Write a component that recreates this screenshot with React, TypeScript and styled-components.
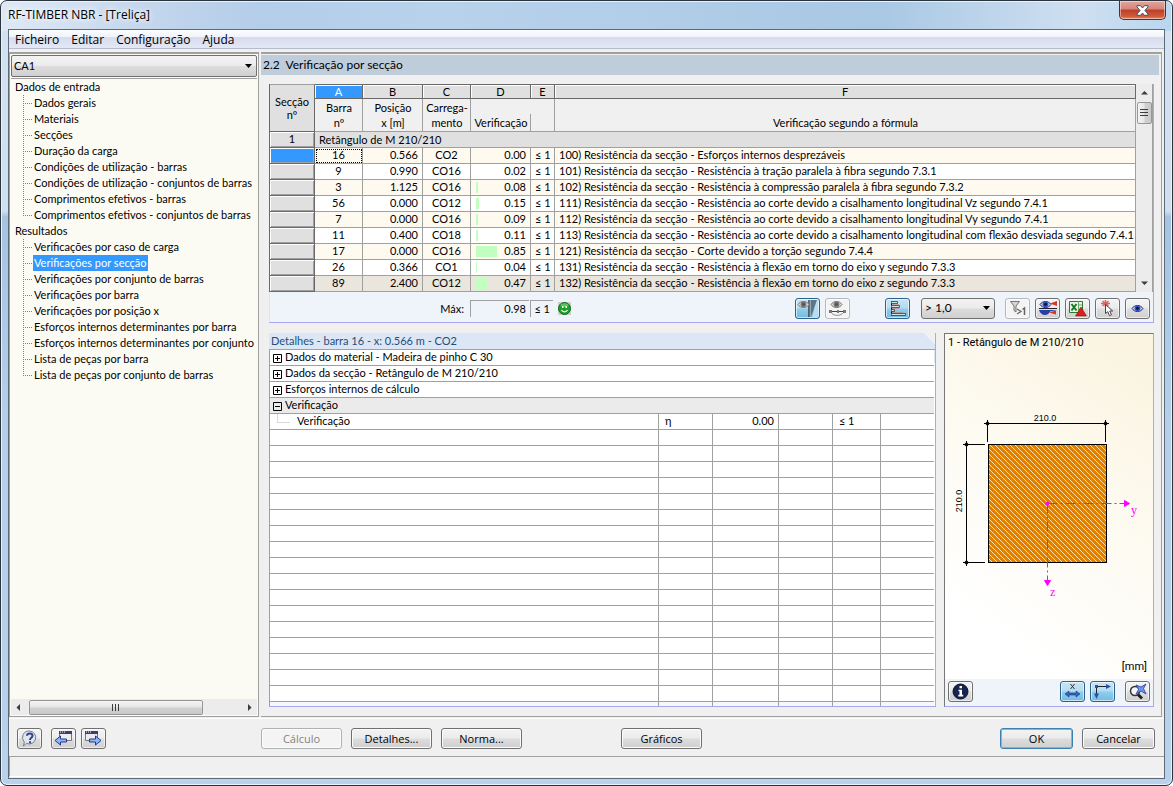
import React from "react";
import styled, { createGlobalStyle, css } from "styled-components";

const segoe = `"Open Sans", "Noto Sans", sans-serif`;
const grid = `Lato, "Liberation Sans", sans-serif`;
const caption = `Roboto, "Liberation Sans", sans-serif`;

const line = "#a0a0a0";
const lilac = "#a8a8ec";
const face = "#f0f0f0";
const accent = "#3399ff";
const pale = "#eff3fa";

const GlobalStyle = createGlobalStyle`
  * { box-sizing: border-box; }
  body { margin: 0; background: #fff; color: #000; }
  button, select { font: inherit; color: inherit; }
`;

const Window = styled.div`
  min-height: 100vh;
  display: flex;
  flex-direction: column;
  padding: 0 7px 6px;
  border: 1px solid #2b333d;
  border-radius: 7px;
  font: 11px/16px ${grid};
  box-shadow: inset 0 0 0 1px #e6f2fc;
  background:
    linear-gradient(to right, #dfe9f5 0, #c3d6ec 150px, #b4cde9 260px, #b9d2ec 440px, #a9c8e4 880px, #cfdff1 1080px, #b9d6ee 100%) top / 100% 30px no-repeat,
    linear-gradient(#d4e2f1 0, #cfdff0 210px, #a6c3e0 216px, #b5cfea 420px, #b9d1ea 100%);
`;

const TitleBar = styled.header`
  display: flex;
  justify-content: space-between;
  align-items: flex-start;
  height: 28px;
  margin-right: -1px;
`;

const Title = styled.h1`
  margin: 0;
  font: 12px/28px ${segoe};
  text-shadow: 0 0 6px #fff, 0 0 6px #fff;
`;

const CloseButton = styled.button`
  width: 47px;
  height: 19px;
  padding: 0;
  display: grid;
  place-items: center;
  border: 1px solid #5b2a2c;
  border-top: 0;
  border-radius: 0 0 5px 5px;
  background: linear-gradient(#e3a59b 0, #d58578 45%, #bd3e27 50%, #cf5b3c 85%, #e08a5f 100%);
  box-shadow: inset 0 0 0 1px rgba(255, 255, 255, 0.45);
`;

const Client = styled.div`
  flex: 1;
  display: flex;
  flex-direction: column;
  border: 1px solid #5d6b78;
  background: ${face};
`;

const MenuBar = styled.nav`
  display: flex;
  gap: 12px;
  height: 19px;
  padding: 0 6px;
  border-bottom: 1px solid #b6bccc;
  background: linear-gradient(#fcfdfe 0, #f0f3fa 38%, #d6dcee 42%, #e2e8f5 100%);
  a { color: #000; text-decoration: none; font: 12px/20px ${segoe}; }
`;

const Main = styled.main`
  flex: 1;
  display: grid;
  grid-template-columns: 250px minmax(0, 1fr);
  gap: 2px;
  padding: 3px 2px 0 0;
`;

const Sidebar = styled.aside`
  display: flex;
  flex-direction: column;
  min-height: 0;
  border: 1px solid ${line};
  border-top-width: 2px;
  padding: 1px;
  background: #fcfbf3;
`;

const selectFace = css`
  appearance: none;
  border: 1px solid #707070;
  border-radius: 3px;
  background:
    url("data:image/svg+xml,%3Csvg xmlns='http://www.w3.org/2000/svg' width='7' height='4'%3E%3Cpath d='M0 0h7L3.5 4z'/%3E%3C/svg%3E") right 4px center no-repeat,
    linear-gradient(#f3f3f3 0, #ebebeb 48%, #dddddd 52%, #d0d0d0 100%);
`;

const CaseSelect = styled.select`
  ${selectFace}
  width: 100%;
  height: 22px;
  padding: 0 4px 0 2px;
  border-radius: 2px;
`;

const Tree = styled.div`
  flex: 1;
  margin-top: 1px;
  padding: 0 0 0 3px;
  border-top: 1px solid ${line};
  white-space: nowrap;
  overflow: hidden;
  ul { list-style: none; margin: 0; padding: 0 0 0 9px; }
  li { display: flex; height: 16px; }
`;

const TreeHead = styled.div`
  height: 16px;
  padding-left: 1px;
`;

const Branch = styled.span<{ $last?: boolean }>`
  flex: none;
  width: 9px;
  height: 16px;
  margin-right: 1px;
  background:
    repeating-linear-gradient(#808080 0 1px, transparent 1px 2px) 0 0 / 1px ${(p) => (p.$last ? "9px" : "16px")} no-repeat,
    repeating-linear-gradient(to right, #808080 0 1px, transparent 1px 2px) 0 8px / 9px 1px no-repeat;
`;

const TreeLink = styled.a<{ $on?: boolean }>`
  padding: 0 1px;
  text-decoration: none;
  color: ${(p) => (p.$on ? "#fff" : "#000")};
  background: ${(p) => (p.$on ? accent : "none")};
`;

const HScroll = styled.div`
  display: flex;
  align-items: center;
  gap: 7px;
  height: 16px;
  padding: 0 4px;
  background: #ececec;
`;

const Thumb = styled.div<{ $vertical?: boolean }>`
  display: grid;
  place-items: center;
  border: 1px solid #979797;
  border-radius: 2px;
  width: ${(p) => (p.$vertical ? "15px" : "174px")};
  height: ${(p) => (p.$vertical ? "22px" : "15px")};
  background: linear-gradient(${(p) => (p.$vertical ? "to right, " : "")}#f4f4f4 0, #e6e6e6 48%, #d2d2d4 52%, #c8c8ca 100%);
`;

const Spacer = styled.div`
  flex: 1;
`;

const Content = styled.section`
  display: flex;
  flex-direction: column;
  min-width: 0;
  border: 1px solid ${line};
  border-top-width: 2px;
  border-left: 0;
  padding: 1px 1px 9px 0;
`;

const SectionTitle = styled.h2`
  margin: 0 1px 9px 0;
  padding: 0 2px;
  height: 20px;
  background: #bfccda;
  font: 12px/20px ${grid};
  white-space: pre;
`;

const Results = styled.section`
  margin: 0 6px 10px 8px;
  border-right: 1px solid ${lilac};
  border-bottom: 1px solid ${lilac};
  background: ${pale};
`;

const TableRow = styled.div`
  display: grid;
  grid-template-columns: minmax(0, 1fr) 17px;
  background: ${face};
`;

const VScroll = styled.div`
  display: flex;
  flex-direction: column;
  align-items: center;
  gap: 7px;
  padding: 6px 0;
  border-right: 1px solid ${line};
  background: #ececec;
`;

const ResultTable = styled.table`
  width: 100%;
  table-layout: fixed;
  border-collapse: separate;
  border-spacing: 0;
  border-left: 1px solid #696969;
  font: 11px/13px ${grid};
  white-space: nowrap;
  th, td { padding: 0; font-weight: normal; overflow: hidden; }
  tbody th, tbody td { vertical-align: top; }
`;

const Letter = styled.th<{ $on?: boolean }>`
  height: 15px;
  line-height: 12px;
  border: 1px solid #696969;
  border-left: 0;
  color: ${(p) => (p.$on ? "#fff" : "#000")};
  background: ${(p) => (p.$on ? accent : "#e0e0e0")};
  box-shadow: inset 1px 1px #fff;
`;

const CornerHead = styled.th`
  border-top: 1px solid ${line};
  border-right: 1px solid #696969;
  border-bottom: 1px solid #696969;
  line-height: 13px;
  background: #e0e0e0;
`;

const NameHead = styled.th<{ $divider?: "full" | "half" }>`
  && { padding-bottom: 1px; }
  height: 33px;
  line-height: 15px;
  vertical-align: bottom;
  border-bottom: 1px solid ${line};
  background: ${(p) =>
    p.$divider === "half"
      ? `linear-gradient(${line}, ${line}) right bottom / 1px 17px no-repeat`
      : `linear-gradient(${line}, ${line}) right bottom / 1px 100% no-repeat`};
`;

const RowHead = styled.th<{ $on?: boolean }>`
  height: 16px;
  border-right: 1px solid #696969;
  border-bottom: 1px solid #696969;
  background: ${(p) => (p.$on ? accent : "#e0e0e0")};
  box-shadow: inset 1px 1px #fff, inset -1px -1px ${line};
`;

const GroupCell = styled.td`
  && { padding-left: 4px; }
  height: 16px;
  line-height: 15px;
  background: #e0e0e0;
  border-right: 1px solid ${line};
  border-bottom: 1px solid ${line};
`;

const Cell = styled.td<{ $align?: string; $tone: string; $focus?: boolean; $wide?: boolean }>`
  && { padding: 0 ${(p) => (p.$wide ? 0 : 4)}px 0 4px; }
  height: 16px;
  text-align: ${(p) => p.$align || "left"};
  border-right: 1px solid ${line};
  border-bottom: 1px solid ${line};
  background: ${(p) => p.$tone};
  ${(p) => p.$focus && "outline: 1px dotted #000; outline-offset: -2px;"}
`;

const Ratio = styled.div`
  display: flex;
  justify-content: space-between;
  align-items: flex-end;
  padding-left: 1px;
`;

const Bar = styled.span`
  height: 11px;
  background: #c0ffc0;
`;

const Toolbar = styled.div`
  display: flex;
  align-items: center;
  gap: 5px;
  height: 30px;
  padding: 2px 3px 0 0;
  border-left: 1px solid #dfe5f2;
`;

const MaxLabel = styled.span`
  width: 200px;
  padding-right: 6px;
  margin-right: -5px;
  text-align: right;
  font: 11px/17px ${grid};
`;

const MaxField = styled.output<{ $w: number }>`
  width: ${(p) => p.$w}px;
  height: 17px;
  padding-right: 3px;
  margin-right: ${(p) => (p.$w > 30 ? "-4px" : "0")};
  border-top: 1px solid ${line};
  border-left: 1px solid ${line};
  text-align: right;
  font: 11px/16px ${grid};
`;

const pressed = css`
  border-color: #2c628b;
  background: linear-gradient(#c9e4f3 0, #b3dcf2 48%, #8fcdec 52%, #74bbe0 100%);
`;

const IconButton = styled.button<{ $pressed?: boolean; $gap?: number }>`
  width: 25px;
  height: 21px;
  padding: 0;
  margin-right: ${(p) => p.$gap || 0}px;
  display: grid;
  place-items: center;
  border: 1px solid #707070;
  border-radius: 3px;
  background: linear-gradient(#f4f4f4 0, #ebebeb 48%, #dddddd 52%, #cfcfcf 100%);
  box-shadow: inset 0 0 0 1px rgba(255, 255, 255, 0.6);
  ${(p) => p.$pressed && pressed}
  &:disabled { border-color: #b4b8bc; background: #f4f4f4; }
`;

const LimitSelect = styled.select`
  ${selectFace}
  width: 74px;
  height: 21px;
  padding: 0 4px 0 3px;
  margin: 0 5px 0 6px;
  font: 12px/18px ${grid};
`;

const Lower = styled.div`
  flex: 1;
  display: grid;
  grid-template-columns: minmax(0, 1fr) 210px;
  gap: 8px;
  margin: 0 6px 0 8px;
`;

const Details = styled.section`
  display: flex;
  flex-direction: column;
  min-width: 0;
  border-right: 1px solid ${lilac};
  border-bottom: 1px solid ${lilac};
  background: linear-gradient(225deg, ${face} 8px, #dce6f4 8px) top / 100% 30px no-repeat, #fff;
`;

const DetailTitle = styled.h3`
  margin: 0;
  padding-left: 2px;
  height: 17px;
  border-bottom: 1px solid ${line};
  color: #1f4e79;
  font: 11px/16px ${grid};
`;

const DetailTable = styled.table`
  width: calc(100% - 1px);
  table-layout: fixed;
  border-collapse: separate;
  border-spacing: 0;
  border-left: 1px solid ${line};
  font: 11px/13px ${grid};
  td { height: 16px; padding: 0; vertical-align: top; border-bottom: 1px solid ${line}; }
  tr > td:not(:last-child) { border-right: 1px solid ${line}; }
  tr:last-child > td { height: 4px; border-bottom: 0; background: #f4f7fb; }
`;

const Fold = styled.button`
  display: flex;
  align-items: flex-end;
  gap: 3px;
  height: 13px;
  padding: 0 0 0 3px;
  border: 0;
  background: none;
`;

const FoldRow = styled.tr<{ $open?: boolean }>`
  background: ${(p) => (p.$open ? "#ebebeb" : "#fff")};
`;

const Child = styled.div`
  display: flex;
  align-items: flex-start;
  gap: 7px;
  padding-left: 7px;
  &::before {
    content: "";
    width: 12px;
    height: 8px;
    border-left: 1px solid #d8d8d8;
    border-bottom: 1px solid #d8d8d8;
  }
`;

const Pad = styled.div<{ $right?: boolean }>`
  padding: 0 4px 0 6px;
  text-align: ${(p) => (p.$right ? "right" : "left")};
`;

const Preview = styled.section`
  display: flex;
  flex-direction: column;
  border: 1px solid ${lilac};
  border-top-color: #777;
  border-left-color: #777;
  background: linear-gradient(35deg, #fff 20%, #fdfaf0 60%, #faf3de 100%);
`;

const PreviewTitle = styled.h3`
  margin: 0;
  padding-left: 3px;
  font: 11px/17px ${caption};
`;

const Drawing = styled.svg`
  flex: 1;
  width: 100%;
  min-height: 0;
`;

const Unit = styled.div`
  padding: 0 6px 4px 0;
  text-align: right;
  font: 11px/16px ${caption};
`;

const PreviewBar = styled.div`
  display: flex;
  align-items: center;
  gap: 5px;
  height: 27px;
  padding: 0 3px 2px 3px;
  background: ${pale};
`;

const Footer = styled.footer`
  display: flex;
  align-items: center;
  gap: 9px;
  height: 39px;
  margin-top: 1px;
  padding: 2px 9px 0 8px;
  border-top: 1px solid #fff;
  border-bottom: 1px solid ${line};
`;

const ToolGroup = styled.div`
  display: flex;
  gap: 5px;
  width: 235px;
`;

const PushButton = styled.button<{ $w: number; $primary?: boolean; $gap?: number }>`
  width: ${(p) => p.$w}px;
  height: 21px;
  padding: 0;
  margin-right: ${(p) => p.$gap || 0}px;
  border: 1px solid ${(p) => (p.$primary ? "#3c7fb1" : "#707070")};
  border-radius: 3px;
  background: linear-gradient(#f3f3f3 0, #ebebeb 48%, #dddddd 52%, #cfcfcf 100%);
  box-shadow: inset 0 0 0 1px ${(p) => (p.$primary ? "#48d0f4" : "#fcfcfc")};
  font: 11px/17px ${segoe};
  &:disabled { border-color: #adb2b5; background: #f4f4f4; color: #838383; }
`;

const StatusBar = styled.div`
  height: 20px;
  margin-bottom: 1px;
  border-left: 1px solid ${line};
  border-bottom: 1px solid #fff;
`;

const Arrow = ({ d, w = 7, h = 7 }: { d: string; w?: number; h?: number }) => (
  <svg width={w} height={h} viewBox={`0 0 ${w} ${h}`}><path d={d} fill="#3c3c3c" /></svg>
);

const Glyph = ({ children }: { children: React.ReactNode }) => (
  <svg width="21" height="17" viewBox="0 0 21 17" fill="none">{children}</svg>
);

const EyeShape = ({ x = 0, y = 0, grey }: { x?: number; y?: number; grey?: boolean }) => (
  <g transform={`translate(${x} ${y})`}>
    <path d="M0 4.500C2.500 0.500 8.500 0.500 11 4.500C8.500 8.500 2.500 8.500 0 4.500Z" fill={grey ? "#dcdcdc" : "#c3cdf2"} stroke={grey ? "#777" : "#1e2f7a"} />
    <circle cx="5.500" cy="4.300" r="2.900" fill={grey ? "#777" : "#3252c4"} />
    <circle cx="5.500" cy="4.300" r="1.500" fill={grey ? "#555" : "#0b1442"} />
  </g>
);

const CloseIcon = () => (
  <svg width="13" height="11" viewBox="0 0 13 11">
    <path d="M1 .7h3.600l1.900 2.300L8.400.7H12v1.200L8.900 5.500 12 9v1.300H8.400L6.500 8l-1.900 2.300H1V9l3.100-3.500L1 1.900z" fill="#fff" stroke="#4a5060" strokeWidth="1" />
  </svg>
);

const HelpIcon = () => (
  <Glyph>
    <path d="M10.500 1a6.500 6.500 0 1 1-3 12.400L4.500 16l.8-4A6.500 6.500 0 0 1 10.500 1Z" fill="#e2e6ee" stroke="#777d88" />
    <path d="M8 5.800c0-3.200 5.500-3.200 5.500 0 0 2-2.500 2-2.500 4.200" stroke="#2c4596" strokeWidth="2" />
    <path d="M10 11.300h2v1.900h-2z" fill="#2c4596" />
  </Glyph>
);

const WindowArrowIcon = ({ right }: { right?: boolean }) => (
  <Glyph>
    <path d={right ? "M2.500 1.500h12v9h-12z" : "M6.500 1.500h12v9h-12z"} fill="#ececec" stroke="#777" />
    <path d={right ? "M2 1h13v3H2z" : "M6 1h13v3H6z"} fill="#3a3f72" />
    <path d={right ? "M3 2h1M5 2h1M7 2h1" : "M7 2h1M9 2h1M11 2h1"} stroke="#fff" strokeWidth="1" />
    <path d={right ? "M18 10.500l-5.500-4.500v3h-6v3h6v3z" : "M2 10.500l5.500-4.500v3h6v3h-6v3z"} fill="#8eb4f3" stroke="#22388f" />
  </Glyph>
);

const EyeBeamIcon = () => (
  <Glyph>
    <path d="M12 0h8L14 17h-2z" fill="#5b7688" />
    <path d="M15 17L20.500 0H21v17z" fill="#b9dcee" />
    <path d="M11.500 0v17" stroke="#333" strokeWidth=".7" />
    <path d="M13 0h1v17h-1z" fill="#8fa9b8" />
    <EyeShape x={1} y={0} grey />
  </Glyph>
);

const EyeMemberIcon = () => (
  <Glyph>
    <EyeShape x={4} y={0} grey />
    <path d="M3 11.500h15" stroke="#444" />
    <path d="M4 12c2 4.500 10 4.500 13 0" stroke="#8a9090" />
    <path d="M2 10h3v3H2zM16 10h3v3h-3zM10 10h2v3h-2z" fill="#777" />
  </Glyph>
);

const BarsIcon = () => (
  <Glyph>
    <path d="M4.500 1v15" stroke="#111" />
    <path d="M4.500 1.500h6v2h-6M4.500 5.500h8v2h-8M4.500 9.500h3v2h-3M4.500 13.500h14v2h-14" fill="#c9e6e4" stroke="#23423f" strokeWidth=".8" />
    <path d="M5 4.500h7M5 8.500h7M5 12.500h11" stroke="#c77" strokeWidth=".6" />
  </Glyph>
);

const FilterIcon = () => (
  <Glyph>
    <path d="M3.500 1.500h9L9 6v6l-2-1.500V6z" fill="#d5d5d5" stroke="#777" />
    <path d="M10 9l4 2.500-4 2.500" stroke="#666" strokeWidth="1.300" />
    <path d="M15.500 9.500L17.500 8v7" stroke="#666" strokeWidth="1.500" />
  </Glyph>
);

const DiagramEyeIcon = () => (
  <Glyph>
    <path d="M13 3.500l7-2.500v5z" fill="#d32" />
    <path d="M2 8.500h18" stroke="#222" />
    <EyeShape x={3} y={0} />
    <path d="M2 10h18l-7 1.500C11 16.500 4 16.500 2 10Z" fill="#2440a8" />
    <path d="M12 12.500l7-2v4z" fill="#d32" />
  </Glyph>
);

const ExcelIcon = () => (
  <Glyph>
    <path d="M2.500 1.500h13v11h-13z" fill="#e8f4e6" stroke="#2d7a34" />
    <path d="M11.500 1v12M11 5h4M11 9h4" stroke="#6aa86a" />
    <path d="M4.500 4l5 6.500M9.500 4l-5 6.500" stroke="#187a28" strokeWidth="2" />
    <path d="M14 7l5.500 9h-11z" fill="#d8201c" stroke="#8e1010" strokeWidth=".6" />
  </Glyph>
);

const PickIcon = () => (
  <Glyph>
    <path d="M4 3.500h9M8.500 0v7M5.500 1l6 5M11.500 1l-6 5" stroke="#e0605c" strokeWidth="1.400" />
    <path d="M8.500 4.500v9l2.300-1.800 1.700 4 2-1-1.800-3.700h3z" fill="#fff" stroke="#444" />
  </Glyph>
);

const EyeIcon = () => <Glyph><EyeShape x={5} y={4} /></Glyph>;

const InfoIcon = () => (
  <Glyph>
    <circle cx="10.500" cy="8.500" r="7.500" fill="#16254f" stroke="#0a1230" />
    <path d="M9.500 3h2.500v2.200H9.500zM8.500 6.800H12v5h1.200V13.500H8.300V11.800h1.200V8.300h-1z" fill="#fff" />
  </Glyph>
);

const DimensionIcon = () => (
  <Glyph>
    <path d="M8.500 1l4 5M12.500 1l-4 5" stroke="#333" />
    <path d="M3 11l4-3v2h7V8l4 3-4 3v-2H7v2z" fill="#3a62c0" stroke="#1d357c" strokeWidth=".6" />
  </Glyph>
);

const AxesIcon = () => (
  <Glyph>
    <path d="M4.500 12V3.500H16" stroke="#222" />
    <path d="M14 1l5 2.500L14 6zM2 10.500h5L4.500 16z" fill="#2a4fb4" />
    <path d="M3 2h3v3H3z" fill="#2a4fb4" />
  </Glyph>
);

const ZoomResetIcon = () => (
  <Glyph>
    <circle cx="8" cy="8" r="4.500" fill="#f4f6fa" stroke="#333" strokeWidth="1.500" />
    <path d="M11 11.500l4 4" stroke="#222" strokeWidth="3" />
    <path d="M9 2l5 2L19 1l-2.500 4.500L19 11l-5-3-5 3 2.500-4.500z" fill="#6e95e8" stroke="#1f3c9c" strokeWidth=".8" />
  </Glyph>
);

const Smiley = () => (
  <svg width="13" height="13" viewBox="0 0 13 13">
    <rect width="13" height="13" fill="#cfcfcf" />
    <circle cx="6.500" cy="6.500" r="6" fill="#1fa02c" stroke="#0c6a18" />
    <ellipse cx="6.500" cy="3" rx="4" ry="1.800" fill="#7fe07f" opacity=".6" />
    <path d="M4 4h1.500v2H4zM7.500 4H9v2H7.500z" fill="#fff" />
    <path d="M3.500 8c1.500 2.500 4.500 2.500 6 0" fill="none" stroke="#fff" strokeWidth="1.200" />
  </svg>
);

const FoldMark = ({ open }: { open?: boolean }) => (
  <svg width="9" height="9" viewBox="0 0 9 9">
    <path d={open ? "M.5.5h8v8h-8zM2 4.500h5" : "M.5.5h8v8h-8zM2 4.500h5M4.500 2v5"} fill="none" stroke="#000" />
  </svg>
);

const inputItems = [
  "Dados gerais", "Materiais", "Secções", "Duração da carga",
  "Condições de utilização - barras", "Condições de utilização - conjuntos de barras",
  "Comprimentos efetivos - barras", "Comprimentos efetivos - conjuntos de barras",
];
const resultItems = [
  "Verificações por caso de carga", "Verificações por secção", "Verificações por conjunto de barras",
  "Verificações por barra", "Verificações por posição x", "Esforços internos determinantes por barra",
  "Esforços internos determinantes por conjunto", "Lista de peças por barra", "Lista de peças por conjunto de barras",
];

const rows: [string, string, string, string, number, string][] = [
  ["16", "0.566", "CO2", "0.00", 0, "100) Resistência da secção - Esforços internos desprezáveis"],
  ["9", "0.990", "CO16", "0.02", 0, "101) Resistência da secção - Resistência à tração paralela à fibra segundo 7.3.1"],
  ["3", "1.125", "CO16", "0.08", 2, "102) Resistência da secção - Resistência à compressão paralela à fibra segundo 7.3.2"],
  ["56", "0.000", "CO12", "0.15", 3, "111) Resistência da secção - Resistência ao corte devido a cisalhamento longitudinal Vz segundo 7.4.1"],
  ["7", "0.000", "CO16", "0.09", 2, "112) Resistência da secção - Resistência ao corte devido a cisalhamento longitudinal Vy segundo 7.4.1"],
  ["11", "0.400", "CO18", "0.11", 2, "113) Resistência da secção - Resistência ao corte devido a cisalhamento longitudinal com flexão desviada segundo 7.4.1"],
  ["17", "0.000", "CO16", "0.85", 21, "121) Resistência da secção - Corte devido a torção segundo 7.4.4"],
  ["26", "0.366", "CO1", "0.04", 1, "131) Resistência da secção - Resistência à flexão em torno do eixo y segundo 7.3.3"],
  ["89", "2.400", "CO12", "0.47", 11, "132) Resistência da secção - Resistência à flexão em torno do eixo z segundo 7.3.3"],
];

const folds = ["Dados do material - Madeira de pinho C 30", "Dados da secção - Retângulo de M 210/210", "Esforços internos de cálculo"];

const TreeBranch = ({ title, items, current }: { title: string; items: string[]; current?: string }) => (
  <>
    <TreeHead>{title}</TreeHead>
    <ul>
      {items.map((item, i) => (
        <li key={item}>
          <Branch $last={i === items.length - 1} />
          <TreeLink href="#" $on={item === current}>{item}</TreeLink>
        </li>
      ))}
    </ul>
  </>
);

const tone = (i: number) => (i === rows.length - 1 ? "#ebe6dd" : i % 2 ? "#fff" : "#fffaf0");

const SectionDrawing = () => (
  <Drawing viewBox="945 351 208 308" role="img" aria-label="210 x 210">
    <defs>
      <pattern id="hatch" width="5" height="5" patternUnits="userSpaceOnUse">
        <rect width="5" height="5" fill="#e08000" />
        <path d="M-1 -1L6 6M-1 4L1 6M4 -1L6 1" stroke="#ffe0b0" strokeWidth="1" />
      </pattern>
    </defs>
    <rect x="988.500" y="444.500" width="118" height="118" fill="url(#hatch)" stroke="#000" />
    <g stroke="#000" fill="#000">
      <path d="M984 423.500h125M987.500 420v22M1105.500 420v22M966.500 441v125M963 444.500h22M963 562.500h22" fill="none" />
      <circle cx="987.500" cy="423.500" r="1.500" /><circle cx="1105.500" cy="423.500" r="1.500" />
      <circle cx="966.500" cy="444.500" r="1.500" /><circle cx="966.500" cy="562.500" r="1.500" />
    </g>
    <g fontFamily="Liberation Sans, sans-serif" fontSize="9" textAnchor="middle">
      <text x="1045" y="421">210.0</text>
      <text transform="translate(962 501) rotate(-90)">210.0</text>
    </g>
    <g stroke="#f0f" fill="#f0f">
      <path d="M1047.500 503.500h77M1047.500 503.500v77" strokeDasharray="10 3 2 3" fill="none" />
      <circle cx="1047.500" cy="503.500" r="1.500" />
      <path d="M1124.500 500.500v6l5-3zM1044.500 580.500h6l-3 5z" />
    </g>
    <g fontFamily="Liberation Serif, serif" fontSize="12" fill="#f0f">
      <text x="1131" y="514">y</text>
      <text x="1050" y="596">z</text>
    </g>
  </Drawing>
);

export default function App() {
  return (
    <>
      <GlobalStyle />
      <Window>
        <TitleBar>
          <Title>RF-TIMBER NBR - [Treliça]</Title>
          <CloseButton aria-label="Fechar"><CloseIcon /></CloseButton>
        </TitleBar>
        <Client>
          <MenuBar>
            {["Ficheiro", "Editar", "Configuração", "Ajuda"].map((m) => <a href="#" key={m}>{m}</a>)}
          </MenuBar>
          <Main>
            <Sidebar>
              <CaseSelect aria-label="Caso"><option>CA1</option></CaseSelect>
              <Tree>
                <TreeBranch title="Dados de entrada" items={inputItems} />
                <TreeBranch title="Resultados" items={resultItems} current="Verificações por secção" />
              </Tree>
              <HScroll>
                <Arrow w={7} h={7} d="M5 0v7L1.500 3.500z" />
                <Thumb><Arrow w={8} h={7} d="M0 0h1v7H0zM3 0h1v7H3zM6 0h1v7H6z" /></Thumb>
                <Spacer />
                <Arrow w={7} h={7} d="M2 0v7l3.500-3.500z" />
              </HScroll>
            </Sidebar>
            <Content>
              <SectionTitle>2.2  Verificação por secção</SectionTitle>
              <Results>
                <TableRow>
                  <ResultTable>
                    <colgroup>
                      <col style={{ width: 45 }} /><col style={{ width: 48 }} /><col style={{ width: 60 }} />
                      <col style={{ width: 48 }} /><col style={{ width: 60 }} /><col style={{ width: 24 }} /><col />
                    </colgroup>
                    <thead>
                      <tr>
                        <CornerHead rowSpan={2}>Secção<br />nº</CornerHead>
                        {["A", "B", "C", "D", "E", "F"].map((l) => <Letter key={l} $on={l === "A"}>{l}</Letter>)}
                      </tr>
                      <tr>
                        <NameHead>Barra<br />nº</NameHead>
                        <NameHead>Posição<br />x [m]</NameHead>
                        <NameHead>Carrega-<br />mento</NameHead>
                        <NameHead $divider="half">Verificação</NameHead>
                        <NameHead />
                        <NameHead>Verificação segundo a fórmula</NameHead>
                      </tr>
                    </thead>
                    <tbody>
                      <tr><RowHead>1</RowHead><GroupCell colSpan={6}>Retângulo de M 210/210</GroupCell></tr>
                      {rows.map(([bar, pos, co, ratio, w, text], i) => (
                        <tr key={bar}>
                          <RowHead $on={i === 0} />
                          <Cell $tone={tone(i)} $align="center" $focus={i === 0}>{bar}</Cell>
                          <Cell $tone={tone(i)} $align="right">{pos}</Cell>
                          <Cell $tone={tone(i)} $align="center">{co}</Cell>
                          <Cell $tone={tone(i)}><Ratio><Bar style={{ width: w }} />{ratio}</Ratio></Cell>
                          <Cell $tone={tone(i)} $wide>≤ 1</Cell>
                          <Cell $tone={tone(i)} $wide>{text}</Cell>
                        </tr>
                      ))}
                    </tbody>
                  </ResultTable>
                  <VScroll>
                    <Arrow w={7} h={5} d="M0 4.500h7L3.500 1z" />
                    <Thumb $vertical><Arrow w={8} h={8} d="M0 0h8v1H0zM0 3h8v1H0zM0 6h8v1H0z" /></Thumb>
                    <Spacer />
                    <Arrow w={7} h={5} d="M0 .5h7L3.500 4z" />
                  </VScroll>
                </TableRow>
                <Toolbar>
                  <MaxLabel>Máx:</MaxLabel>
                  <MaxField $w={59}>0.98</MaxField>
                  <MaxField $w={23}>≤ 1</MaxField>
                  <Smiley />
                  <Spacer />
                  <IconButton $pressed aria-label="Visualizar barra"><EyeBeamIcon /></IconButton>
                  <IconButton disabled $gap={30} aria-label="Visualizar conjunto"><EyeMemberIcon /></IconButton>
                  <IconButton $pressed aria-label="Barras coloridas"><BarsIcon /></IconButton>
                  <LimitSelect aria-label="Limite"><option>&gt; 1,0</option></LimitSelect>
                  <IconButton disabled aria-label="Filtro"><FilterIcon /></IconButton>
                  <IconButton aria-label="Diagramas"><DiagramEyeIcon /></IconButton>
                  <IconButton aria-label="Exportar"><ExcelIcon /></IconButton>
                  <IconButton aria-label="Selecionar"><PickIcon /></IconButton>
                  <IconButton aria-label="Vista"><EyeIcon /></IconButton>
                </Toolbar>
              </Results>
              <Lower>
                <Details>
                  <DetailTitle>Detalhes - barra 16 - x: 0.566 m - CO2</DetailTitle>
                  <DetailTable>
                    <colgroup>
                      <col /><col style={{ width: 54 }} /><col style={{ width: 66 }} />
                      <col style={{ width: 54 }} /><col style={{ width: 48 }} /><col style={{ width: 53 }} />
                    </colgroup>
                    <tbody>
                      {folds.map((f) => (
                        <FoldRow key={f}><td colSpan={6}><Fold><FoldMark />{f}</Fold></td></FoldRow>
                      ))}
                      <FoldRow $open><td colSpan={6}><Fold><FoldMark open />Verificação</Fold></td></FoldRow>
                      <tr>
                        <td><Child>Verificação</Child></td>
                        <td><Pad>η</Pad></td>
                        <td><Pad $right>0.00</Pad></td>
                        <td />
                        <td><Pad>≤ 1</Pad></td>
                        <td />
                      </tr>
                      {Array.from({ length: 18 }, (_, i) => (
                        <tr key={i}><td /><td /><td /><td /><td /><td /></tr>
                      ))}
                    </tbody>
                  </DetailTable>
                </Details>
                <Preview>
                  <PreviewTitle>1 - Retângulo de M 210/210</PreviewTitle>
                  <SectionDrawing />
                  <Unit>[mm]</Unit>
                  <PreviewBar>
                    <IconButton aria-label="Informação"><InfoIcon /></IconButton>
                    <Spacer />
                    <IconButton $pressed aria-label="Cotas"><DimensionIcon /></IconButton>
                    <IconButton $pressed $gap={5} aria-label="Eixos"><AxesIcon /></IconButton>
                    <IconButton aria-label="Repor zoom"><ZoomResetIcon /></IconButton>
                  </PreviewBar>
                </Preview>
              </Lower>
            </Content>
          </Main>
          <Footer>
            <ToolGroup>
              <IconButton $gap={4} aria-label="Ajuda"><HelpIcon /></IconButton>
              <IconButton aria-label="Anterior"><WindowArrowIcon /></IconButton>
              <IconButton aria-label="Seguinte"><WindowArrowIcon right /></IconButton>
            </ToolGroup>
            <PushButton $w={81} disabled>Cálculo</PushButton>
            <PushButton $w={81}>Detalhes...</PushButton>
            <PushButton $w={81} $gap={90}>Norma...</PushButton>
            <PushButton $w={81}>Gráficos</PushButton>
            <Spacer />
            <PushButton $w={73} $primary>OK</PushButton>
            <PushButton $w={73}>Cancelar</PushButton>
          </Footer>
          <StatusBar />
        </Client>
      </Window>
    </>
  );
}
